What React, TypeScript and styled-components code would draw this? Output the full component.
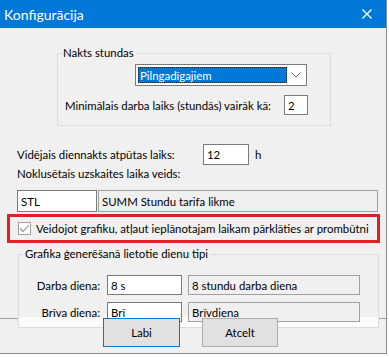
import React from 'react';
import styled, { createGlobalStyle } from 'styled-components';

const Global = createGlobalStyle`
  html, body { margin: 0; padding: 0; background: #ffffff; }
  body {
    font-family: Lato, "Liberation Sans", sans-serif;
    font-size: 11.4px;
    color: #000;
  }
  * { box-sizing: border-box; }
`;

const Window = styled.div`
  width: 387px;
  height: 354px;
  background: #f0f0f0;
  border-right: 1px solid #8c8c8c;
  border-bottom: 1px solid #8c8c8c;
  display: flex;
  flex-direction: column;
`;

const TitleBar = styled.div`
  height: 28px;
  flex: none;
  background: #0078d7;
  color: #fff;
  display: flex;
  align-items: center;
  padding: 0 14px 0 4px;
  font-size: 14px;
`;

const Title = styled.span`
  flex: 1;
`;

const Body = styled.div`
  flex: 1;
  display: flex;
  flex-direction: column;
`;

const GroupBox = styled.fieldset<{ $top: number; $left: number; $width: number }>`
  margin: ${p => p.$top}px 0 0 ${p => p.$left}px;
  width: ${p => p.$width}px;
  padding: 0;
  border: 1px solid #dcdcdc;
  min-inline-size: 0;
`;

const Legend = styled.legend<{ $left: number }>`
  margin-left: ${p => p.$left}px;
  padding: 0 2px;
  line-height: 16px;
`;

const Group1Inner = styled.div`
  display: flex;
  flex-direction: column;
  gap: 9px;
  padding: 3px 22px 10px 7px;
`;

const Combo = styled.div`
  margin-left: 70px;
  width: 172px;
  height: 22px;
  background: #fff;
  border: 1px solid #7a7a7a;
  display: flex;
  align-items: center;
  padding: 2px;
`;

const ComboSelected = styled.div`
  flex: 1;
  height: 100%;
  background: #0078d7;
  color: #fff;
  outline: 1px dotted #222;
  outline-offset: -1px;
  padding-left: 2px;
  display: flex;
  align-items: center;
`;

const ComboArrow = styled.div`
  width: 17px;
  height: 100%;
  display: flex;
  align-items: center;
  justify-content: center;
`;

const Row = styled.div<{ $height: number }>`
  display: flex;
  align-items: center;
  height: ${p => p.$height}px;
  white-space: nowrap;
`;

const Input = styled.div<{ $width: number; $height: number; $readonly?: boolean }>`
  width: ${p => p.$width}px;
  height: ${p => p.$height}px;
  flex: none;
  background: ${p => (p.$readonly ? '#f0f0f0' : '#fff')};
  border: 1px solid ${p => (p.$readonly ? '#a0a0a0' : '#7a7a7a')};
  display: flex;
  align-items: center;
  padding-left: 3px;
  white-space: nowrap;
  overflow: hidden;
`;

const PushRight = styled.div`
  margin-left: auto;
`;

const FieldRow = styled.div<{ $top: number; $height: number }>`
  display: flex;
  align-items: center;
  margin-top: ${p => p.$top}px;
  padding-left: 17px;
  height: ${p => p.$height}px;
`;

const FixedLabel = styled.span<{ $width: number }>`
  width: ${p => p.$width}px;
  flex: none;
`;

const Unit = styled.span`
  margin-left: 6px;
`;

const PlainLabel = styled.div`
  margin-top: 1px;
  padding-left: 17px;
  line-height: 16px;
`;

const Highlight = styled.div`
  margin: 2px 0 0 7px;
  width: 373px;
  height: 29px;
  border: 3px solid #e31e24;
  display: flex;
  align-items: center;
  padding-left: 8px;
  gap: 5px;
  white-space: nowrap;
`;

const CheckBox = styled.div`
  width: 13px;
  height: 13px;
  flex: none;
  border: 1px solid #a0a0a0;
  background: #fff;
  display: flex;
  align-items: center;
  justify-content: center;
`;

const Group2 = styled(GroupBox)`
  position: relative;
  z-index: 1;
  margin-bottom: -10px;
  background: linear-gradient(to bottom, #f0f0f0 calc(100% - 10px), #fbfbfb calc(100% - 10px));
`;

const Group2Inner = styled.div`
  display: grid;
  grid-template-columns: 82px 75px 172px;
  column-gap: 6px;
  row-gap: 7px;
  padding: 13px 0 5px 0;
  grid-auto-rows: 20px;
`;

const DayLabel = styled.div`
  text-align: right;
  padding-right: 1px;
  align-self: center;
  white-space: nowrap;
`;

const ButtonBar = styled.div`
  flex: 1;
  display: flex;
  align-items: flex-start;
  gap: 22px;
  padding-left: 103px;
  position: relative;
  &::before {
    content: '';
    position: absolute;
    left: 0;
    right: 0;
    top: 0;
    height: 1px;
    background: #a0a0a0;
  }
`;

const Button = styled.button<{ $default?: boolean; $width: number }>`
  position: relative;
  z-index: 2;
  width: ${p => p.$width}px;
  height: 29px;
  font: inherit;
  color: #000;
  background: #e1e1e1;
  border: 1px solid ${p => (p.$default ? '#0078d7' : '#adadad')};
  padding: 0;
`;

export default function App() {
  return (
    <>
      <Global />
      <Window>
        <TitleBar>
          <Title>Konfigurācija</Title>
          <svg width="10" height="10" viewBox="0 0 10 10">
            <path d="M0.5 0.5 L9.5 9.5 M9.5 0.5 L0.5 9.5" stroke="#fff" strokeWidth="1.3" />
          </svg>
        </TitleBar>
        <Body>
          <GroupBox $top={17} $left={57} $width={274}>
            <Legend $left={3}>Nakts stundas</Legend>
            <Group1Inner>
              <Combo>
                <ComboSelected>Pilngadīgajiem</ComboSelected>
                <ComboArrow>
                  <svg width="10" height="6" viewBox="0 0 10 6">
                    <path d="M0.5 0.5 L5 5 L9.5 0.5" stroke="#666" strokeWidth="1" fill="none" />
                  </svg>
                </ComboArrow>
              </Combo>
              <Row $height={20}>
                <span>Minimālais darba laiks (stundās) vairāk kā:</span>
                <PushRight>
                  <Input $width={24} $height={20}>2</Input>
                </PushRight>
              </Row>
            </Group1Inner>
          </GroupBox>

          <FieldRow $top={18} $height={21}>
            <FixedLabel $width={186}>Vidējais diennakts atpūtas laiks:</FixedLabel>
            <Input $width={46} $height={21}>12</Input>
            <Unit>h</Unit>
          </FieldRow>

          <PlainLabel>Noklusētais uzskaites laika veids:</PlainLabel>

          <FieldRow $top={8} $height={22}>
            <Input $width={80} $height={22}>STL</Input>
            <Input $width={280} $height={22} $readonly style={{ marginLeft: 1 }}>
              SUMM Stundu tarifa likme
            </Input>
          </FieldRow>

          <Highlight>
            <CheckBox>
              <svg width="11" height="9" viewBox="0 0 11 9">
                <path d="M1 4.5 L4 7.5 L10 1" stroke="#8a8a8a" strokeWidth="1.1" fill="none" />
              </svg>
            </CheckBox>
            <span>Veidojot grafiku, atļaut ieplānotajam laikam pārklāties ar prombūtni</span>
          </Highlight>

          <Group2 $top={3} $left={18} $width={361}>
            <Legend $left={4}>Grafika ģenerēšanā lietotie dienu tipi</Legend>
            <Group2Inner>
              <DayLabel>Darba diena:</DayLabel>
              <Input $width={75} $height={20}>8 s</Input>
              <Input $width={172} $height={20} $readonly>8 stundu darba diena</Input>
              <DayLabel>Brīva diena:</DayLabel>
              <Input $width={75} $height={20}>Brī</Input>
              <Input $width={172} $height={20} $readonly>Brīvdiena</Input>
            </Group2Inner>
          </Group2>

          <ButtonBar>
            <Button $default $width={77}>Labi</Button>
            <Button $width={76}>Atcelt</Button>
          </ButtonBar>
        </Body>
      </Window>
    </>
  );
}
